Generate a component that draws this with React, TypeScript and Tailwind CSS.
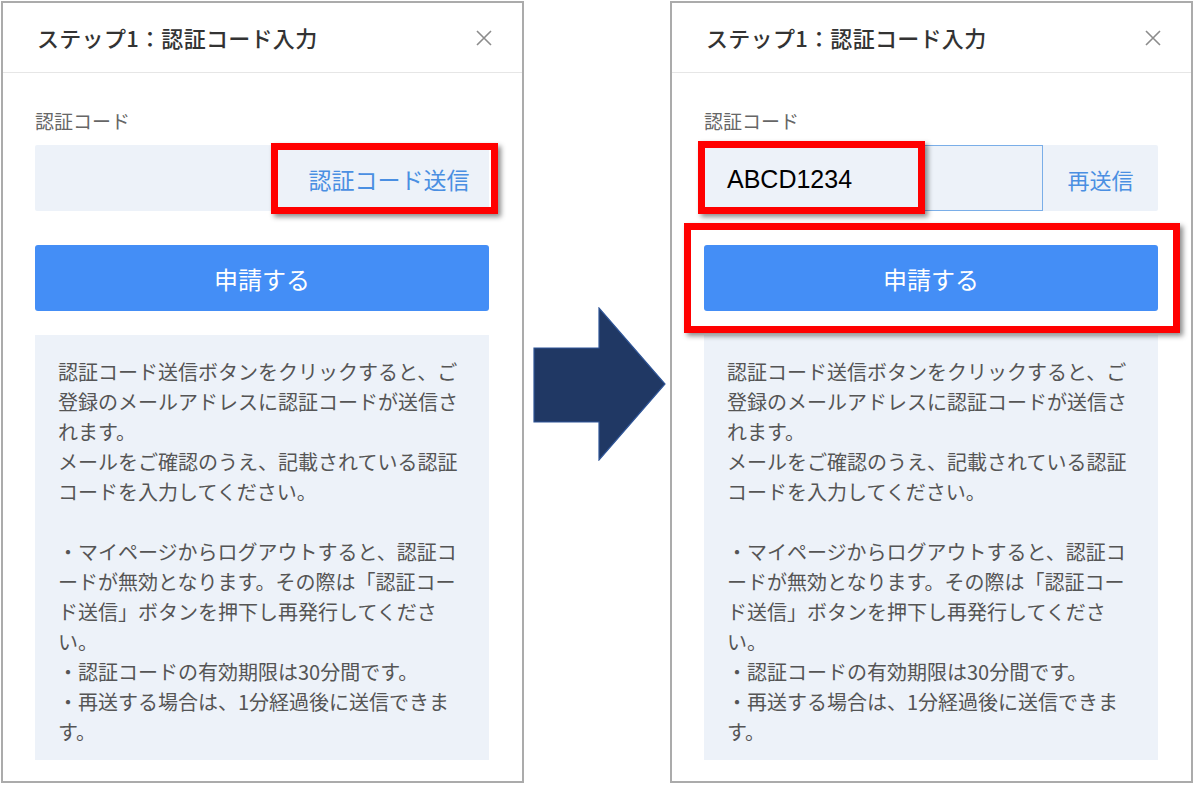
import React from 'react';

const JP = "font-['Noto_Sans_CJK_JP','Noto_Sans',sans-serif]";

const infoLines = [
  '認証コード送信ボタンをクリックすると、ご',
  '登録のメールアドレスに認証コードが送信さ',
  'れます。',
  'メールをご確認のうえ、記載されている認証',
  'コードを入力してください。',
  '',
  '・マイページからログアウトすると、認証コ',
  'ードが無効となります。その際は「認証コー',
  'ド送信」ボタンを押下し再発行してくださ',
  'い。',
  '・認証コードの有効期限は30分間です。',
  '・再送する場合は、1分経過後に送信できま',
  'す。',
];

// ─── Red highlight frame ──────────────────────────────────────

function RedFrame({ className }: { className: string }) {
  return (
    <div
      className={`absolute border-[7px] border-[#ff0000] shadow-[3px_3px_5px_rgba(0,0,0,0.45)] pointer-events-none ${className}`}
    />
  );
}

// ─── Close icon ───────────────────────────────────────────────

function CloseIcon() {
  return (
    <svg width="16" height="16" viewBox="0 0 16 16" className="text-[#8c8c8c]">
      <path d="M1 1 L15 15 M15 1 L1 15" stroke="currentColor" strokeWidth="1.6" fill="none" />
    </svg>
  );
}

// ─── Dialog panel ─────────────────────────────────────────────

function Panel({ filled }: { filled: boolean }) {
  return (
    <div className={`w-[523px] h-[782px] mt-px bg-white border-2 border-[#ababab] flex flex-col ${JP}`}>
      {/* Header */}
      <div className="h-[70px] flex items-center justify-between pl-[34px] pr-[30px] border-b border-[#e6e6e6]">
        <span className="text-[22px] font-medium text-[#333] tracking-[0.3px]">
          ステップ1：認証コード入力
        </span>
        <CloseIcon />
      </div>

      {/* Body */}
      <div className="flex flex-col pl-[32px] pr-[33px] pt-[35px]">
        <div className="text-[19px] leading-[26px] text-[#666]">認証コード</div>

        {/* Code input row */}
        <div className="relative mt-[11px] h-[66px] flex bg-[#edf2f9] rounded-[2px]">
          {filled ? (
            <>
              <div className="w-[339px] border border-[#7aaee8] flex items-center pl-[22px] pt-[4px] font-['Liberation_Sans',Arial,sans-serif] text-[25px] text-black">
                ABCD1234
              </div>
              <div className="flex-1 flex items-center justify-center pt-[2px] text-[22px] text-[#4a8fe2]">
                再送信
              </div>
              <RedFrame className="left-[-6px] top-[-4px] w-[227px] h-[73px]" />
            </>
          ) : (
            <>
              <div className="flex-1" />
              <div className="w-[200px] flex items-center justify-center pt-[2px] text-[23px] text-[#4a8fe2]">
                認証コード送信
              </div>
              <RedFrame className="left-[236px] right-[-9px] top-[-2px] bottom-[-3px]" />
            </>
          )}
        </div>

        {/* Submit */}
        <div className="relative mt-[34px]">
          <button className="w-full h-[66px] rounded-[3px] bg-[#448ef6] text-white text-[24px] pt-[2px]">
            申請する
          </button>
          {filled && <RedFrame className="left-[-20px] right-[-22px] top-[-22px] bottom-[-22px]" />}
        </div>

        {/* Info */}
        <div className="mt-[24px] h-[425px] bg-[#edf2f9] pl-[23px] pt-[22px] text-[20px] leading-[30px] text-[#555]">
          {infoLines.map((line, i) => (
            <div key={i} className="h-[30px] whitespace-nowrap">
              {line}
            </div>
          ))}
        </div>
      </div>
    </div>
  );
}

// ─── Arrow ────────────────────────────────────────────────────

function Arrow() {
  return (
    <svg width="134" height="154" viewBox="0 0 134 154" className="ml-[9px] mt-[-17px]">
      <polygon
        points="1,41 66,41 66,1 132,77 66,153 66,115 1,115"
        fill="#203864"
        stroke="#2f5597"
        strokeWidth="1.2"
      />
    </svg>
  );
}

export default function App() {
  return (
    <div className="w-[1194px] h-[785px] bg-white flex pl-px overflow-hidden">
      <Panel filled={false} />
      <div className="flex-1 flex items-center">
        <Arrow />
      </div>
      <Panel filled={true} />
      <div className="w-px" />
    </div>
  );
}
